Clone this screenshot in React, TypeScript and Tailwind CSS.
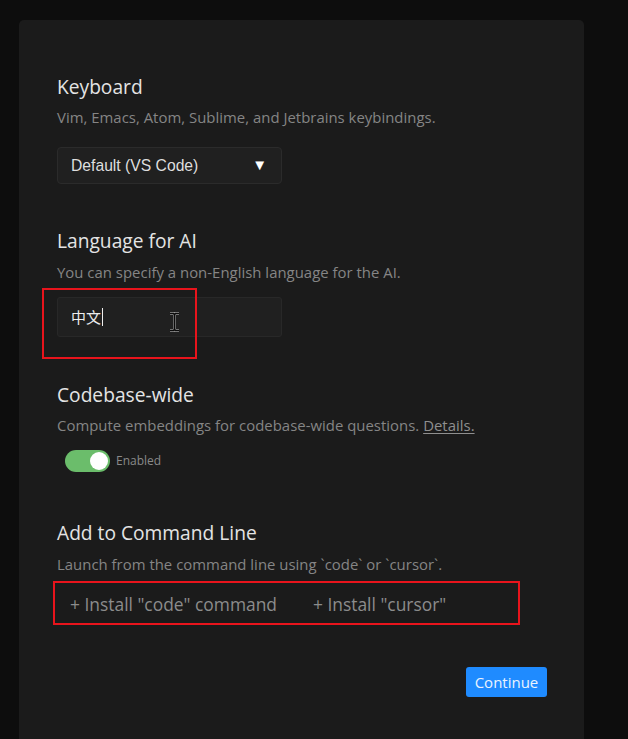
import React from 'react';

const sans = { fontFamily: '"Open Sans", "Noto Sans", sans-serif' };

function Heading({ children }: { children: React.ReactNode }) {
  return <h2 className="text-[19.2px] leading-[26px] text-[#e4e4e4]">{children}</h2>;
}

function Sub({ children, className = '' }: { children: React.ReactNode; className?: string }) {
  return <p className={`text-[14.9px] leading-[20px] text-[#858585] tracking-[0.02px] ${className}`}>{children}</p>;
}

export default function App() {
  return (
    <div className="w-[628px] h-[739px] bg-[#0d0d0d] overflow-hidden pt-[20px] pl-[19px]" style={sans}>
      <div className="w-[565px] h-[740px] bg-[#1b1b1b] rounded-t-[5px] pt-[54px] pl-[38px] pr-[37px]">
        {/* Keyboard */}
        <Heading>Keyboard</Heading>
        <Sub className="mt-[7px]">Vim, Emacs, Atom, Sublime, and Jetbrains keybindings.</Sub>
        <div
          className="mt-[20px] w-[225px] h-[37px] flex items-center justify-between pl-[13px] pr-[14px] bg-[#202020] border border-[#2b2b2b] rounded-[4px] text-[15.7px] text-[#dedede]"
          style={{ fontFamily: '"Liberation Sans", Arial, sans-serif' }}
        >
          <span>Default (VS Code)</span>
          <span className="text-[15px] text-white">▼</span>
        </div>

        {/* Language */}
        <div className="mt-[44px]">
          <Heading>Language for AI</Heading>
          <Sub className="mt-[8px]">You can specify a non-English language for the AI.</Sub>
          <div className="relative mt-[15px] w-[225px] h-[40px] bg-[#202020] border border-[#282828] rounded-[3px] flex items-center pl-[13px]">
            <span className="text-[15px] text-[#ececec]" style={{ fontFamily: '"Noto Sans CJK SC", sans-serif' }}>中文</span>
            <span className="w-px h-[18px] bg-[#eeeeee] ml-[1px]" />
            <svg className="absolute left-[111px] top-[14px]" width="11" height="20" viewBox="0 0 11 20">
              <path d="M1 1.5h3.5l1 1 1-1h3.5M5.5 2.5v15M1 18.5h3.5l1-1 1 1h3.5" stroke="#9a9a9a" strokeWidth="3" fill="none" />
              <path d="M1 1.5h3.5l1 1 1-1h3.5M5.5 2.5v15M1 18.5h3.5l1-1 1 1h3.5" stroke="#0a0a0a" strokeWidth="1.7" fill="none" />
            </svg>
            <div className="absolute left-[-16px] top-[-10px] w-[155px] h-[71px] border-2 border-[#e8141c]" />
          </div>
        </div>

        {/* Codebase */}
        <div className="mt-[45px]">
          <Heading>Codebase-wide</Heading>
          <Sub className="mt-[7px]">
            Compute embeddings for codebase-wide questions.{' '}
            <span className="underline underline-offset-2 text-[#8f8f8f]">Details.</span>
          </Sub>
          <div className="mt-[15px] ml-[8px] flex items-center gap-[6px]">
            <div className="w-[45px] h-[22px] rounded-full bg-[#6bbd6b] flex items-center justify-end pr-[2px]">
              <div className="w-[18px] h-[18px] rounded-full bg-white" />
            </div>
            <span className="text-[12px] text-[#8a8a8a]">Enabled</span>
          </div>
        </div>

        {/* Command line */}
        <div className="mt-[48px]">
          <Heading>Add to Command Line</Heading>
          <Sub className="mt-[8px]">Launch from the command line using `code` or `cursor`.</Sub>
          <div className="relative mt-[18px] flex items-center h-[24px] text-[17.4px] text-[#8c8c8c]">
            <span className="ml-[13px]">+ Install "code" command</span>
            <span className="ml-[36px]">+ Install "cursor"</span>
            <div className="absolute left-[-4px] top-[-11px] w-[467px] h-[44px] border-2 border-[#e8141c]" />
          </div>
        </div>

        <div className="mt-[51px] flex justify-end">
          <button className="w-[81px] h-[30px] rounded-[3px] bg-[#1f8bff] text-[15px] text-[#eaf3ff]">Continue</button>
        </div>
      </div>
    </div>
  );
}
